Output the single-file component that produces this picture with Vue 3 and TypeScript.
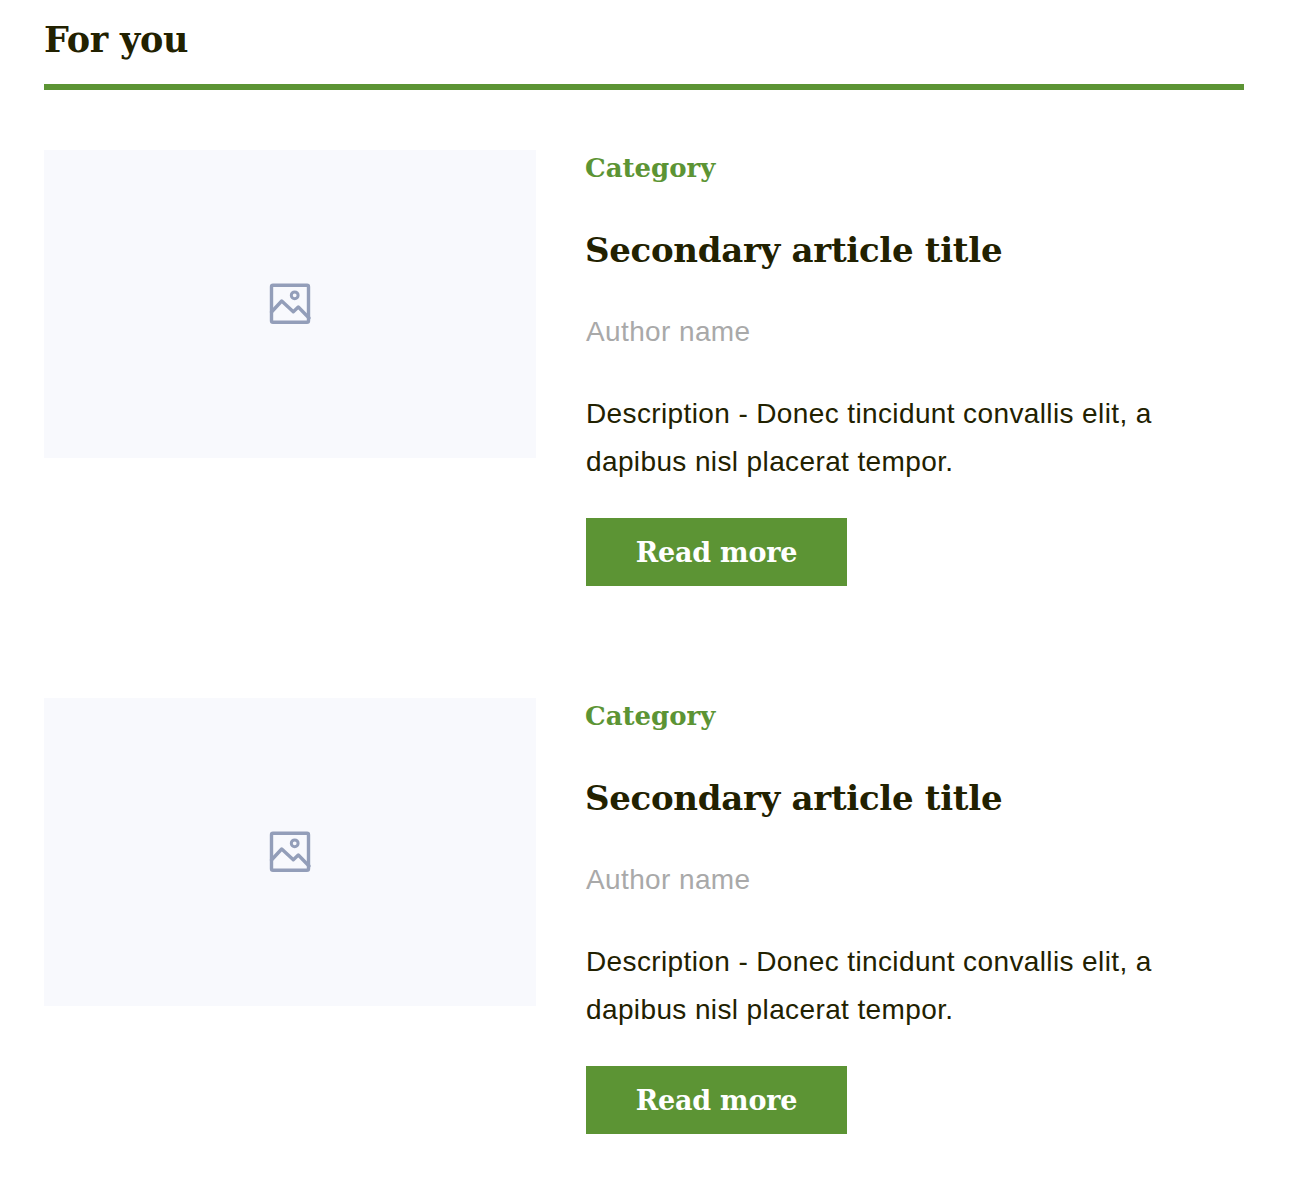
<template>
  <main class="page">
    <h2 class="section-title">For you</h2>
    <div class="section-rule" />
    <article v-for="item in articles" :key="item.id" class="article">
      <div class="article__image">
        <svg width="44" height="44" viewBox="0 0 44 44" fill="none" stroke="#939eb9" stroke-width="3.4" stroke-linejoin="round" stroke-linecap="round">
          <rect x="3.5" y="3.3" width="37" height="37" rx="1.5" />
          <circle cx="26.7" cy="13.3" r="3.4" stroke-width="3" />
          <path d="M3.5 30 L13.7 19 L25.3 29.7 L30.3 25 L41 36" />
        </svg>
      </div>
      <div class="article__body">
        <div class="article__category">{{ item.category }}</div>
        <h3 class="article__title">{{ item.title }}</h3>
        <div class="article__author">{{ item.author }}</div>
        <p class="article__desc">{{ item.description }}</p>
        <button class="article__btn">Read more</button>
      </div>
    </article>
  </main>
</template>

<script setup lang="ts">
interface Article {
  id: number;
  category: string;
  title: string;
  author: string;
  description: string;
}

const articles: Article[] = [1, 2].map((id) => ({
  id,
  category: "Category",
  title: "Secondary article title",
  author: "Author name",
  description: "Description - Donec tincidunt convallis elit, a dapibus nisl placerat tempor.",
}));
</script>

<style>
body {
  background: #fff;
}
</style>

<style scoped>
.page {
  width: 1200px;
  padding: 16px 0 46px 44px;
  color: #222100;
  font-family: "Liberation Sans", Arial, sans-serif;
}

.section-title {
  margin: 0;
  font-family: "DejaVu Serif", serif;
  font-size: 35px;
  line-height: 48px;
  font-weight: 700;
  letter-spacing: -0.25px;
}

.section-rule {
  height: 6px;
  margin-top: 20px;
  background: #5c9434;
}

.article {
  display: flex;
  gap: 50px;
  margin-top: 60px;
}

.article + .article {
  margin-top: 112px;
}

.article__image {
  flex: none;
  width: 492px;
  height: 308px;
  display: flex;
  align-items: center;
  justify-content: center;
  background: #f8f9fd;
}

.article__body {
  flex: 1;
}

.article__category {
  font-family: "DejaVu Serif", serif;
  font-size: 26px;
  line-height: 36px;
  font-weight: 700;
  text-indent: -1px;
  color: #5c9434;
}

.article__title {
  margin: 42px 0 0;
  font-family: "DejaVu Serif", serif;
  font-size: 34px;
  line-height: 44px;
  font-weight: 700;
  letter-spacing: -0.3px;
  text-indent: -1px;
}

.article__author {
  margin-top: 42px;
  font-size: 28px;
  line-height: 36px;
  letter-spacing: 0.38px;
  color: #a9a9a9;
}

.article__desc {
  margin: 40px 0 0;
  font-size: 28px;
  line-height: 48px;
  letter-spacing: 0.38px;
  width: 600px;
}

.article__btn {
  display: block;
  width: 261px;
  height: 68px;
  margin-top: 32px;
  padding: 0;
  border: none;
  background: #5c9434;
  color: #fff;
  font-family: "DejaVu Serif", serif;
  font-size: 27px;
  font-weight: 700;
  letter-spacing: -0.2px;
}
</style>
